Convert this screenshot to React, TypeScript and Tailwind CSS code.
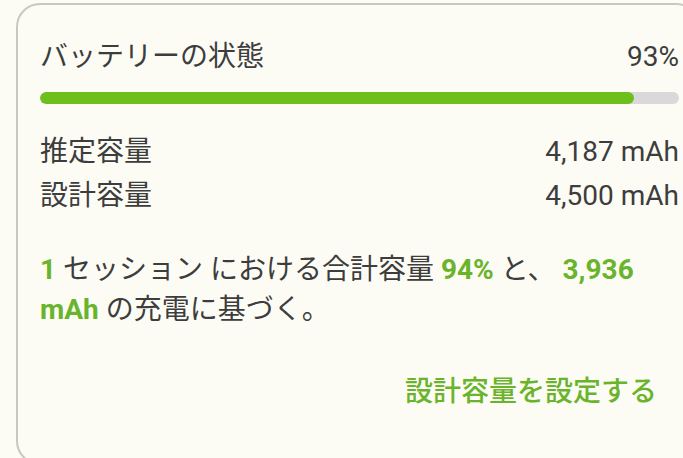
const font = { fontFamily: "Roboto, 'Noto Sans CJK JP', sans-serif" };

function Row({ label, value }: { label: string; value: string }) {
  return (
    <div className="flex justify-between leading-[44px]">
      <span>{label}</span>
      <span>{value}</span>
    </div>
  );
}

export default function App() {
  const health = 93;
  return (
    <div
      className="w-[683px] h-[458px] overflow-hidden bg-[#fcfcf5] text-[#3d3d3d] text-[28px]"
      style={font}
    >
      <div className="ml-[16px] mt-[3px] w-[684px] h-[462px] rounded-[24px] border-2 border-[#c8c8c0] pl-[22px] pr-[19px] pt-[36px]">
        <div className="flex justify-between leading-[32px]">
          <span>バッテリーの状態</span>
          <span>{health}%</span>
        </div>
        <div className="mt-[19px] h-[12px] rounded-full bg-[#d9d9d9] overflow-hidden">
          <div className="h-full rounded-full bg-[#6dbf1c]" style={{ width: `${health}%` }} />
        </div>
        <div className="mt-[26px]">
          <Row label="推定容量" value="4,187 mAh" />
          <Row label="設計容量" value="4,500 mAh" />
        </div>
        <p className="mt-[32px] leading-[40px] pr-[20px]">
          <b className="font-bold text-[#6ab42c]">1</b> セッション における合計容量{" "}
          <b className="font-bold text-[#6ab42c]">94%</b> と、{" "}
          <b className="font-bold text-[#6ab42c]">3,936 mAh</b> の充電に基づく。
        </p>
        <div className="mt-[42px] flex justify-end pr-[22px] leading-[40px]">
          <button className="font-medium text-[#6ab42c]">設計容量を設定する</button>
        </div>
      </div>
    </div>
  );
}
